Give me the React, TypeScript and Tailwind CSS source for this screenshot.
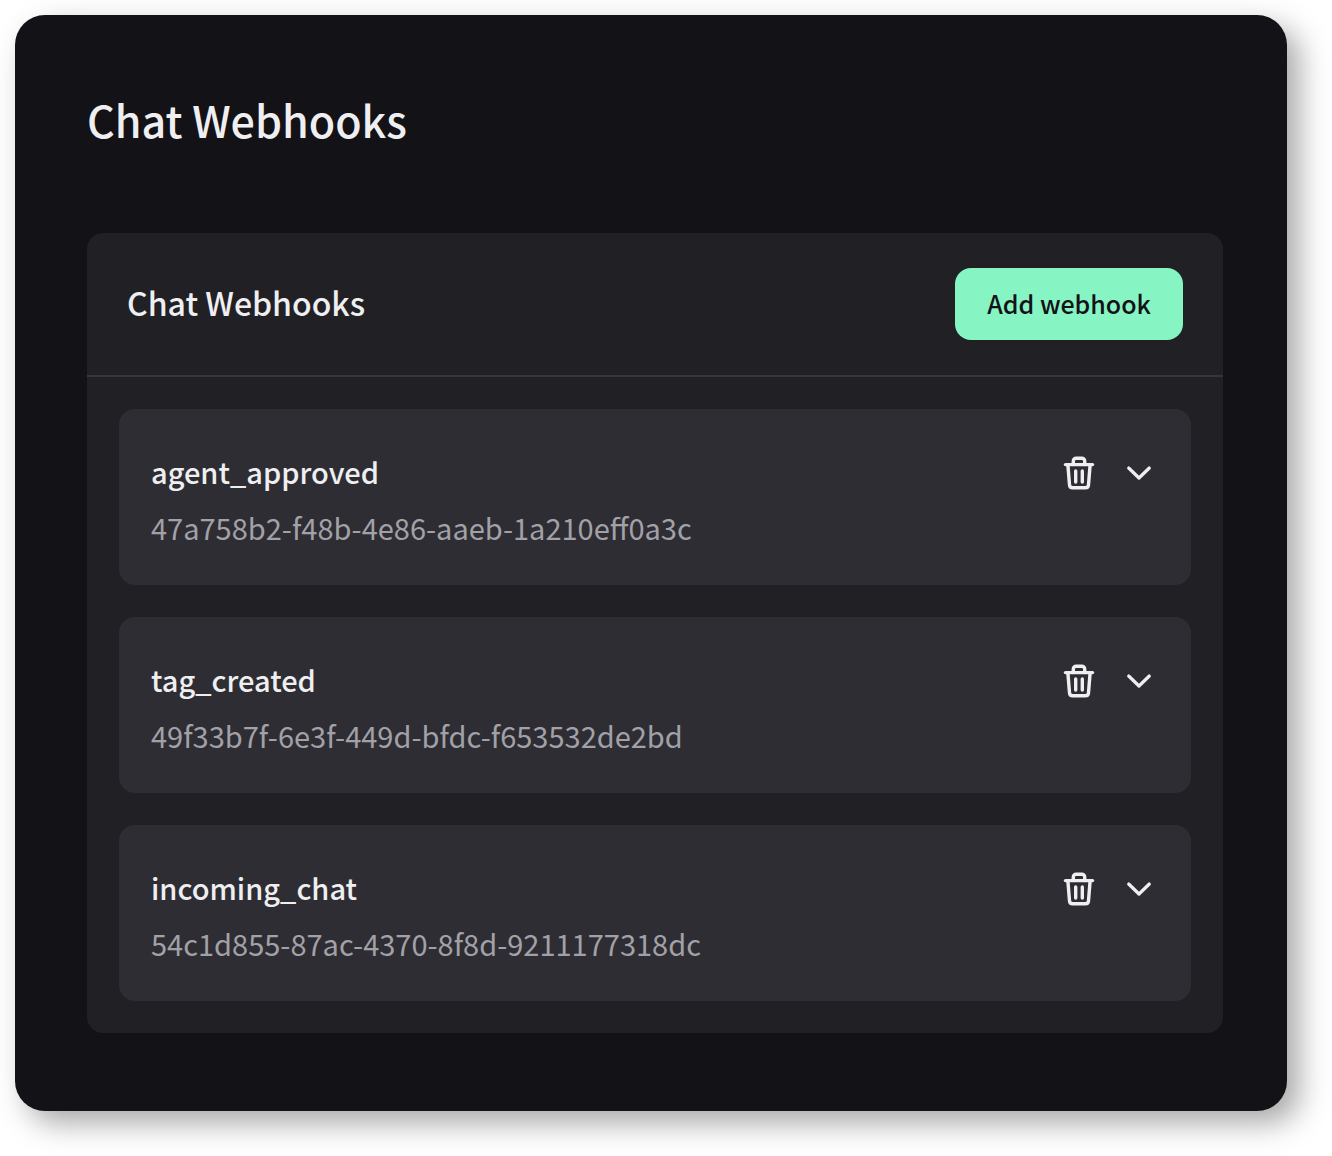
const webhooks = [
  { action: "agent_approved", id: "47a758b2-f48b-4e86-aaeb-1a210eff0a3c" },
  { action: "tag_created", id: "49f33b7f-6e3f-449d-bfdc-f653532de2bd" },
  { action: "incoming_chat", id: "54c1d855-87ac-4370-8f8d-9211177318dc" },
];

function TrashIcon() {
  return (
    <svg
      viewBox="0 0 40 40"
      className="size-10"
      fill="none"
      stroke="currentColor"
      strokeWidth="3.4"
      strokeLinecap="round"
      strokeLinejoin="round"
      aria-hidden="true"
    >
      <path d="M6.500 11.600h27" />
      <path d="M14.300 11.500V8a2.800 2.800 0 0 1 2.800-2.800h5.800A2.800 2.800 0 0 1 25.700 8v3.500" />
      <path d="M8.900 12l1.600 19.800A3.200 3.200 0 0 0 13.700 34.800h12.600a3.200 3.200 0 0 0 3.200-3L31.100 12" />
      <path d="M16.700 18v11M23.300 18v11" />
    </svg>
  );
}

function ChevronIcon() {
  return (
    <svg
      viewBox="0 0 40 40"
      className="size-10"
      fill="none"
      stroke="currentColor"
      strokeWidth="3.2"
      strokeLinecap="round"
      strokeLinejoin="round"
      aria-hidden="true"
    >
      <path d="M9.700 15l10.300 10L30.300 15" />
    </svg>
  );
}

function WebhookItem({ action, id }: { action: string; id: string }) {
  return (
    <li className="rounded-2xl bg-[#2e2d33] px-8 pt-8 pb-9">
      <div className="flex h-16 items-center justify-between">
        <h3 className="pb-0.5 text-[29px] font-medium">{action}</h3>
        <div className="flex gap-5">
          <button type="button" aria-label={`Delete ${action}`}>
            <TrashIcon />
          </button>
          <button type="button" aria-label={`Expand ${action}`}>
            <ChevronIcon />
          </button>
        </div>
      </div>
      <p className="text-[29px] leading-11 text-[#a2a1a8]">{id}</p>
    </li>
  );
}

export default function App() {
  return (
    <div className="bg-white pt-[15px] pr-[45px] pb-[45px] pl-[15px] font-['Noto_Sans_CJK_SC',sans-serif]">
      <main className="rounded-[30px] bg-[#131217] pt-[72px] pr-16 pb-[78px] pl-[72px] text-[#efeff1] shadow-[12px_12px_30px_rgba(0,0,0,0.35)]">
        <h1 className="text-[43px] leading-[64px] font-medium">Chat Webhooks</h1>
        <section className="mt-[82px] overflow-hidden rounded-2xl bg-[#212025]">
          <header className="flex items-center justify-between border-b-2 border-[#37363b] px-10 py-[35px]">
            <h2 className="pb-1 text-[32px] leading-12 font-medium">Chat Webhooks</h2>
            <button
              type="button"
              className="h-18 rounded-2xl bg-[#86f5c3] px-8 text-[25px] font-medium text-[#131217]"
            >
              Add webhook
            </button>
          </header>
          <ul className="flex flex-col gap-8 p-8">
            {webhooks.map((webhook) => (
              <WebhookItem key={webhook.id} {...webhook} />
            ))}
          </ul>
        </section>
      </main>
    </div>
  );
}
